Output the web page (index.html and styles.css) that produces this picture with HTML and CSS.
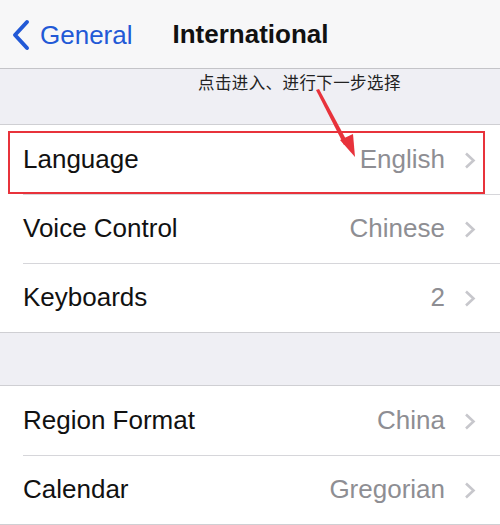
FILE: index.html
```html
<!DOCTYPE html>
<html lang="en">
<head>
    <meta charset="UTF-8">
    <title>International</title>
    <link rel="stylesheet" href="styles.css">
</head>
<body>
<div class="screen">
    <div class="nav">
        <a class="nav__back">
            <svg class="nav__chevron" width="22" height="32" viewBox="0 0 22 32">
                <path d="M17 3 L5 16 L17 29" fill="none" stroke="#2259d6" stroke-width="4" stroke-linecap="round" stroke-linejoin="round"/>
            </svg>
            General
        </a>
        <h1 class="nav__title">International</h1>
    </div>

    <div class="gap gap--hint">
        <span class="hint">点击进入、进行下一步选择</span>
    </div>

    <div class="group">
        <div class="row row--marked">
            <span class="row__label">Language</span>
            <span class="row__value">English</span>
            <svg class="row__chevron" width="12" height="17" viewBox="0 0 12 17"><path d="M2 1.5 L9.5 8.5 L2 15.5" fill="none" stroke="#c7c7cc" stroke-width="2.6"/></svg>
            <span class="mark"></span>
        </div>
        <div class="row">
            <span class="row__label">Voice Control</span>
            <span class="row__value">Chinese</span>
            <svg class="row__chevron" width="12" height="17" viewBox="0 0 12 17"><path d="M2 1.5 L9.5 8.5 L2 15.5" fill="none" stroke="#c7c7cc" stroke-width="2.6"/></svg>
        </div>
        <div class="row">
            <span class="row__label">Keyboards</span>
            <span class="row__value">2</span>
            <svg class="row__chevron" width="12" height="17" viewBox="0 0 12 17"><path d="M2 1.5 L9.5 8.5 L2 15.5" fill="none" stroke="#c7c7cc" stroke-width="2.6"/></svg>
        </div>
    </div>

    <div class="gap gap--short"></div>

    <div class="group">
        <div class="row">
            <span class="row__label">Region Format</span>
            <span class="row__value">China</span>
            <svg class="row__chevron" width="12" height="17" viewBox="0 0 12 17"><path d="M2 1.5 L9.5 8.5 L2 15.5" fill="none" stroke="#c7c7cc" stroke-width="2.6"/></svg>
        </div>
        <div class="row">
            <span class="row__label">Calendar</span>
            <span class="row__value">Gregorian</span>
            <svg class="row__chevron" width="12" height="17" viewBox="0 0 12 17"><path d="M2 1.5 L9.5 8.5 L2 15.5" fill="none" stroke="#c7c7cc" stroke-width="2.6"/></svg>
        </div>
    </div>

    <!-- annotation arrow -->
    <svg class="arrow" width="500" height="200" viewBox="0 0 500 200">
        <path d="M316 90 L319 89 L348 143 L344 145 Z" fill="#e8323b"/>
        <path d="M340 140 L355 157 L353 134 Z" fill="#e8323b"/>
    </svg>
</div>
</body>
</html>
```

FILE: styles.css
```css
* {
    box-sizing: border-box;
}
html, body {
    margin: 0;
    padding: 0;
}
body {
    background-color: #efeff4;
    font-family: "Liberation Sans", Arial, sans-serif;
}
.screen {
    position: relative;
    width: 500px;
    height: 525px;
    overflow: hidden;
}
.nav {
    height: 69px;
    display: flex;
    align-items: center;
    background-color: #f7f7f8;
    border-bottom: 1px solid #c4c4c8;
}
.nav__back {
    display: flex;
    align-items: center;
    gap: 8px;
    padding-left: 10px;
    color: #2259d6;
    font-size: 26px;
    margin-top: 2px;
}
.nav__chevron {
    display: block;
}
.nav__title {
    margin: 1px 0 0 40px;
    font-size: 26px;
    font-weight: 700;
    color: #111;
}
.gap {
    height: 55px;
    background-color: #efeff4;
}
.gap--short {
    height: 52px;
}
.gap--hint {
    padding: 0 0 0 198px;
    line-height: 26px;
}
.hint {
    font-family: "Noto Sans CJK SC", sans-serif;
    font-size: 16.5px;
    color: #222;
    letter-spacing: 0.4px;
}
.group {
    background-color: #fff;
    border-top: 1px solid #cfcfd3;
    border-bottom: 1px solid #cfcfd3;
}
.row {
    position: relative;
    height: 69px;
    display: flex;
    align-items: center;
    padding: 0 24px 0 23px;
    font-size: 26px;
}
.row + .row::before {
    content: "";
    position: absolute;
    top: 0;
    left: 23px;
    right: 0;
    border-top: 1px solid #d6d6da;
}
.row__label {
    flex: 1;
    color: #111;
}
.row__value {
    color: #8e8e93;
    margin-right: 19px;
}
.row__chevron {
    display: block;
    margin-top: 1px;
}
.mark {
    position: absolute;
    top: 6px;
    left: 8px;
    right: 15px;
    bottom: 0;
    border: 2px solid #e8323b;
}
.arrow {
    position: absolute;
    top: 0;
    left: 0;
}
```
